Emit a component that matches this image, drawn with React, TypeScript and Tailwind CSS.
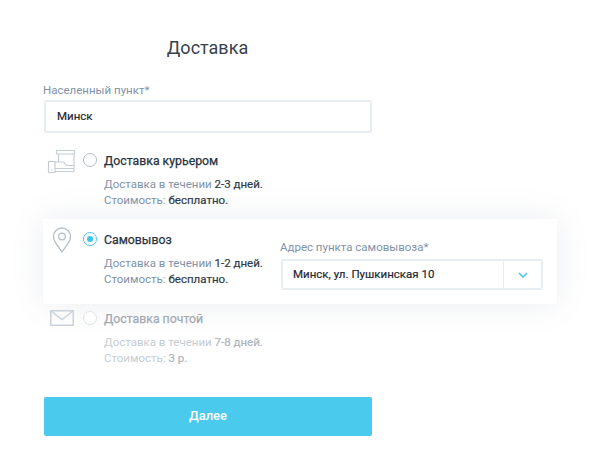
function Radio({ on, faded }: { on?: boolean; faded?: boolean }) {
  return (
    <span className={`flex h-[14px] w-[14px] shrink-0 items-center justify-center rounded-full border ${on ? "border-[#4bcbec]" : faded ? "border-[#dfe3e8]" : "border-[#b4bcc6]"} bg-white`}>
      {on ? <span className="h-[6px] w-[6px] rounded-full bg-[#3cc4ea]" /> : null}
    </span>
  );
}

function Courier() {
  return (
    <svg width="30" height="26" viewBox="0 0 30 26" fill="none" stroke="#c3ced9" strokeWidth="1.200" className="block">
      <path d="M9.500 2.500h18v3.500h-18zM11.500 6v8M27 6v17.500M8 14h8c2 0 2 3.500 4 3.500h7M8 20.500h19M8 23.500h19" />
      <path d="M1.500 13.500h6.500v11H1.500zM4 22h1.500" />
    </svg>
  );
}

function Pin() {
  return (
    <svg width="20" height="26" viewBox="0 0 20 26" fill="none" stroke="#b5bdc6" strokeWidth="1.300" className="block">
      <path d="M10 25C6 19 1.500 15 1.500 9.500a8.500 8.500 0 0 1 17 0C18.500 15 14 19 10 25z" />
      <circle cx="10" cy="9.500" r="3.300" />
    </svg>
  );
}

function Mail() {
  return (
    <svg width="24" height="16" viewBox="0 0 24 16" fill="none" stroke="#c9d2db" strokeWidth="1.500" className="block">
      <path d="M.8.800h22.400v14.400H.8z" />
      <path d="M1 1l11 8.500L23 1" />
    </svg>
  );
}

function Info({ title, days, price, iconBox, icon, on, faded }: { title: string; days: string; price: string; iconBox: string; icon: React.ReactNode; on?: boolean; faded?: boolean }) {
  const muted = faded ? "text-[#c6ccd4]" : "text-[#7f92a8]";
  const strong = faded ? "text-[#aeb4bc]" : "text-[#2f3a46]";
  return (
    <div className="flex">
      <div className={iconBox}>{icon}</div>
      <div className="mt-[3px]"><Radio on={on} faded={faded} /></div>
      <div className="ml-[7px]">
        <div className={`h-5 pt-px text-[12.300px] leading-5 [-webkit-text-stroke:0.25px] ${faded ? "text-[#a3a9b2]" : "text-[#28323d]"}`}>{title}</div>
        <div className={`mt-[6px] h-4 text-[11.500px] leading-4 ${muted}`}>
          Доставка в течении <span className={`[-webkit-text-stroke:0.2px] ${strong}`}>{days}</span>
        </div>
        <div className={`h-4 text-[11.500px] leading-4 ${muted}`}>
          Стоимость: <span className={`[-webkit-text-stroke:0.2px] ${strong}`}>{price}</span>
        </div>
      </div>
    </div>
  );
}

export default function App() {
  return (
    <div className="h-[475px] w-[590px] overflow-hidden bg-white pt-9 pl-[43px] font-['Roboto',sans-serif]">
      <h1 className="mb-[22px] w-[329px] text-center text-lg leading-6 font-normal text-[#36414d]">Доставка</h1>
      <div className="mb-[2px] h-4 text-[11.500px] leading-4 text-[#7f92a8]">Населенный пункт*</div>
      <div className="ml-px flex h-[33px] w-[328px] items-center rounded-[3px] border-2 border-[#e8edf1] bg-white pl-[11px] text-[11.500px] text-[#1f2831] [-webkit-text-stroke:0.2px]">Минск</div>

      <div className="mt-[17px]">
        <Info iconBox="w-10 pl-1 -mt-[2px]" title="Доставка курьером" days="2-3 дней." price="бесплатно." icon={<Courier />} />
      </div>

      <div className="mt-[11px] flex h-[85px] w-[514px] rounded-[2px] bg-white pt-[10px] shadow-[0_0_32px_rgba(90,110,140,0.13)]">
        <Info iconBox="w-10 pl-[9px] -mt-[2px]" on title="Самовывоз" days="1-2 дней." price="бесплатно." icon={<Pin />} />
        <div className="mt-[10px] mr-[14px] ml-auto w-[262px]">
          <div className="mb-[4px] -ml-px h-4 text-[11.500px] leading-4 text-[#7f92a8]">Адрес пункта самовывоза*</div>
          <div className="flex h-[31px] items-stretch rounded-[3px] border-2 border-[#e8edf1] bg-white text-[11.500px] text-[#1f2831] [-webkit-text-stroke:0.2px]">
            <div className="flex flex-1 items-center pl-[10px]">Минск, ул. Пушкинская 10</div>
            <div className="flex w-[38px] items-center justify-center border-l border-[#e8edf1]">
              <svg width="10" height="6" viewBox="0 0 10 6" fill="none" stroke="#45c6ec" strokeWidth="1.500"><path d="M1 1l4 4 4-4" /></svg>
            </div>
          </div>
        </div>
      </div>

      <div className="mt-1">
        <Info iconBox="w-10 pl-[7px] mt-[2px]" faded title="Доставка почтой" days="7-8 дней." price="3 р." icon={<Mail />} />
      </div>

      <button className="mt-[31px] ml-px block h-[39px] w-[328px] rounded-[2px] bg-[#4acaec] pb-[2px] text-[13px] font-medium text-white">Далее</button>
    </div>
  );
}
